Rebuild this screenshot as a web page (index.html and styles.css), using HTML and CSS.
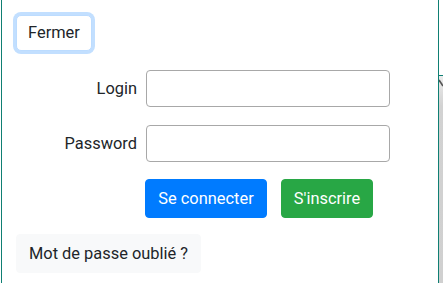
FILE: index.html
```html
<!DOCTYPE html>
<html lang="fr">
<head>
<meta charset="utf-8">
<title>Connexion</title>
<link rel="stylesheet" href="styles.css">
</head>
<body>
<div class="page">
  <div class="gutter"></div>
  <div class="panel">
    <button class="btn btn-close" type="button">Fermer</button>
    <form class="login-form">
      <label class="lbl" for="login">Login</label>
      <input class="field" id="login" type="text">
      <label class="lbl" for="password">Password</label>
      <input class="field" id="password" type="password">
      <div class="actions">
        <button class="btn btn-primary" type="button">Se connecter</button>
        <button class="btn btn-success" type="button">S'inscrire</button>
      </div>
    </form>
    <button class="btn btn-light" type="button">Mot de passe oublié ?</button>
  </div>
  <div class="side">
    <div class="side-top"></div>
    <div class="side-bottom">
      <svg class="side-icon" width="4" height="10" viewBox="0 0 4 10"><path d="M0 2 L4 8" stroke="#555" stroke-width="1.6" fill="none"/></svg>
    </div>
  </div>
</div>
</body>
</html>
```

FILE: styles.css
```css
* { box-sizing: border-box; }
html, body { margin: 0; padding: 0; background: #fff; }
body {
  font-family: Roboto, "Liberation Sans", Arial, sans-serif;
  color: #212529;
  font-size: 16.4px;
}
.page {
  display: flex;
  width: 443px;
  height: 283px;
  overflow: hidden;
}
.gutter { width: 1px; flex: none; background: #fff; }
.panel {
  width: 438px;
  flex: none;
  border-left: 1px solid #0f7f73;
  border-right: 1px solid #0f7f73;
  padding: 15px 0 0 14px;
  display: flex;
  flex-direction: column;
  align-items: flex-start;
}
.btn {
  font-family: inherit;
  font-size: 16.4px;
  line-height: 24px;
  border-radius: 4px;
  border: 1px solid transparent;
  padding: 6px 12px;
  color: #212529;
  cursor: pointer;
}
.btn-close {
  height: 36px;
  width: 76px;
  padding: 0;
  background: #fff;
  border-color: #bcdcff;
  box-shadow: 0 0 0 3px #c2dfff;
  border-radius: 5px;
}
.login-form {
  margin-top: 19px;
  margin-left: -14px;
  display: grid;
  grid-template-columns: 135px 244px;
  column-gap: 9px;
  row-gap: 18px;
  align-items: center;
}
.lbl {
  text-align: right;
  font-size: 16.4px;
}
.field {
  height: 37px;
  width: 244px;
  border: 1px solid #a8a8a8;
  border-radius: 4px;
  font: inherit;
  padding: 6px 12px;
  background: #fff;
}
.actions {
  grid-column: 2;
  display: flex;
  gap: 14px;
  margin-left: -1px;
  margin-top: -1px;
}
.btn-primary {
  background: #007bff;
  border-color: #007bff;
  color: #fff;
  width: 122px;
  height: 39px;
  padding: 0;
}
.btn-success {
  background: #28a745;
  border-color: #28a745;
  color: #fff;
  width: 92px;
  height: 39px;
  padding: 0;
}
.btn-light {
  margin-top: 16px;
  background: #f8f9fa;
  border-color: #f8f9fa;
  width: 185px;
  height: 39px;
  padding: 0;
  margin-left: 0;
}
.side {
  flex: 1;
  display: flex;
  flex-direction: column;
}
.side-top {
  height: 76px;
  background: #fff;
  border-bottom: 1px solid #0f7f73;
  flex: none;
}
.side-bottom {
  flex: 1;
  background: linear-gradient(#ececec, #d2d2d2 30px, #d0d0d0);
  padding-top: 2px;
}
.side-icon { display: block; }
```
